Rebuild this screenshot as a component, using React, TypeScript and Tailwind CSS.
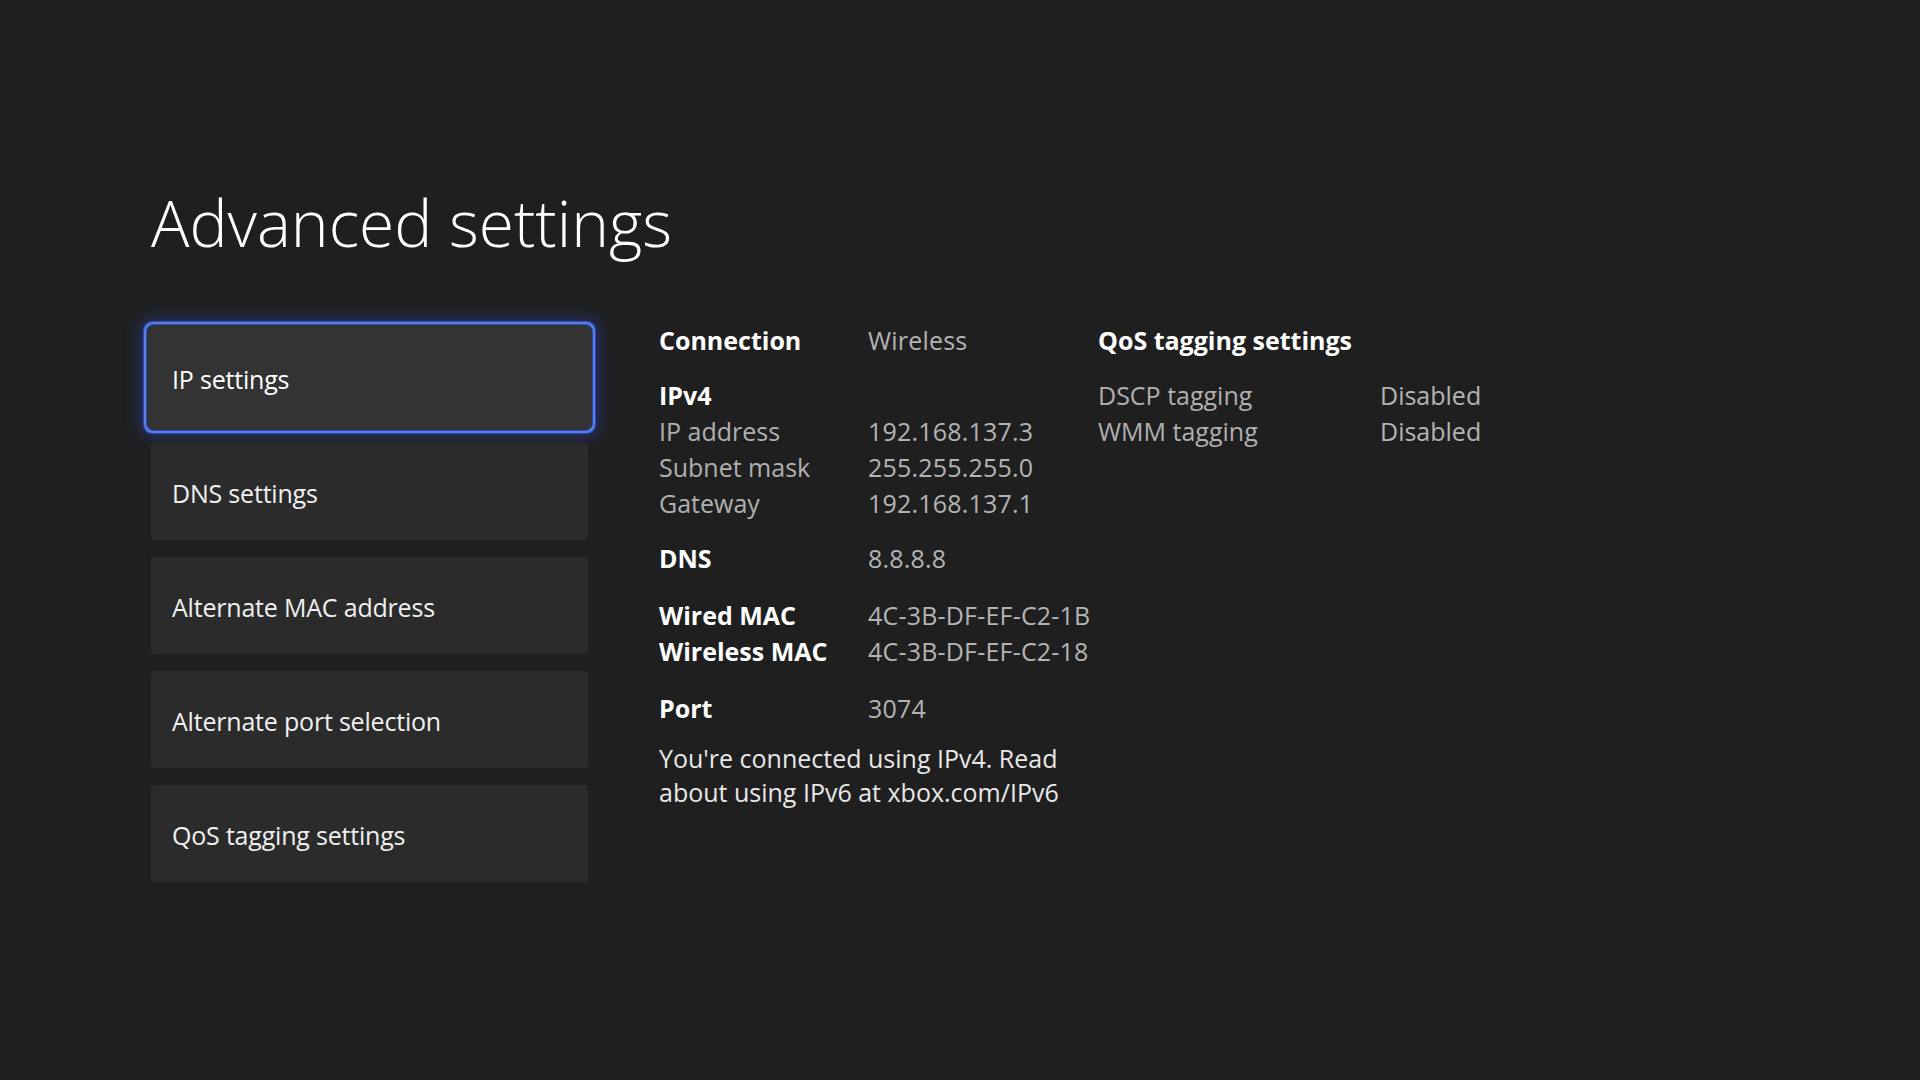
import React from 'react'

const menu = ['IP settings', 'DNS settings', 'Alternate MAC address', 'Alternate port selection', 'QoS tagging settings']

const ipRows = [
  { label: 'IP address', value: '192.168.137.3' },
  { label: 'Subnet mask', value: '255.255.255.0' },
  { label: 'Gateway', value: '192.168.137.1' },
]

const qosRows = [
  { label: 'DSCP tagging', value: 'Disabled' },
  { label: 'WMM tagging', value: 'Disabled' },
]

const Row: React.FC<{ label: string; value?: string; bold?: boolean; className?: string }> = ({ label, value, bold, className }) => (
  <div className={`flex h-[36px] leading-[36px] ${className ?? ''}`}>
    <span className={`w-[209px] shrink-0 ${bold ? 'font-bold text-white' : 'text-[#b0b0b0]'}`}>{label}</span>
    {value && <span className="text-[#b4b4b4] tracking-[0.2px]">{value}</span>}
  </div>
)

const App: React.FC = () => {
  return (
    <div
      className="min-h-screen w-full bg-[#1f1f1f] pl-[151px] pt-[191px] text-white"
      style={{ fontFamily: '"Open Sans", "Noto Sans", sans-serif' }}
    >
      {/* Title */}
      <h1 className="text-[64px] leading-[64px] font-light text-white">Advanced settings</h1>

      <div className="mt-[67px] flex items-start">
        {/* Left menu */}
        <div className="flex w-[437px] flex-col gap-[17px] pt-[7px]">
          {menu.map((item, idx) => (
            <div
              key={item}
              className={`flex h-[97px] items-center rounded-[3px] pl-[21px] pt-[5px] text-[25px] tracking-[-0.2px] ${
                idx === 0
                  ? 'bg-[#333333] text-white shadow-[0_0_0_4px_#333333,0_0_0_5px_#2c49b0,0_0_0_7px_#5b7de4,0_0_0_8px_#2c49b0,0_0_16px_10px_rgba(45,75,200,0.5)]'
                  : 'bg-[#2b2b2b] text-[#f0f0f0]'
              }`}
            >
              {item}
            </div>
          ))}
        </div>

        {/* Details */}
        <div className="ml-[71px] flex text-[25px]">
          <div className="w-[439px]">
            <Row label="Connection" value="Wireless" bold />

            <div className="mt-[19px]">
              <Row label="IPv4" bold />
              {ipRows.map((r) => (
                <Row key={r.label} label={r.label} value={r.value} />
              ))}
            </div>

            <Row label="DNS" value="8.8.8.8" bold className="mt-[19px]" />

            <div className="mt-[21px]">
              <Row label="Wired MAC" value="4C-3B-DF-EF-C2-1B" bold />
              <Row label="Wireless MAC" value="4C-3B-DF-EF-C2-18" bold />
            </div>

            <Row label="Port" value="3074" bold className="mt-[21px]" />

            <p className="mt-[15px] leading-[34px] text-[#e8e8e8]">
              You're connected using IPv4. Read
              <br />
              about using IPv6 at xbox.com/IPv6
            </p>
          </div>

          <div>
            <div className="h-[36px] leading-[36px] font-bold text-white">QoS tagging settings</div>
            <div className="mt-[19px]">
              {qosRows.map((r) => (
                <div key={r.label} className="flex h-[36px] leading-[36px]">
                  <span className="w-[282px] shrink-0 text-[#b0b0b0]">{r.label}</span>
                  <span className="text-[#b4b4b4]">{r.value}</span>
                </div>
              ))}
            </div>
          </div>
        </div>
      </div>
    </div>
  )
}

export default App
